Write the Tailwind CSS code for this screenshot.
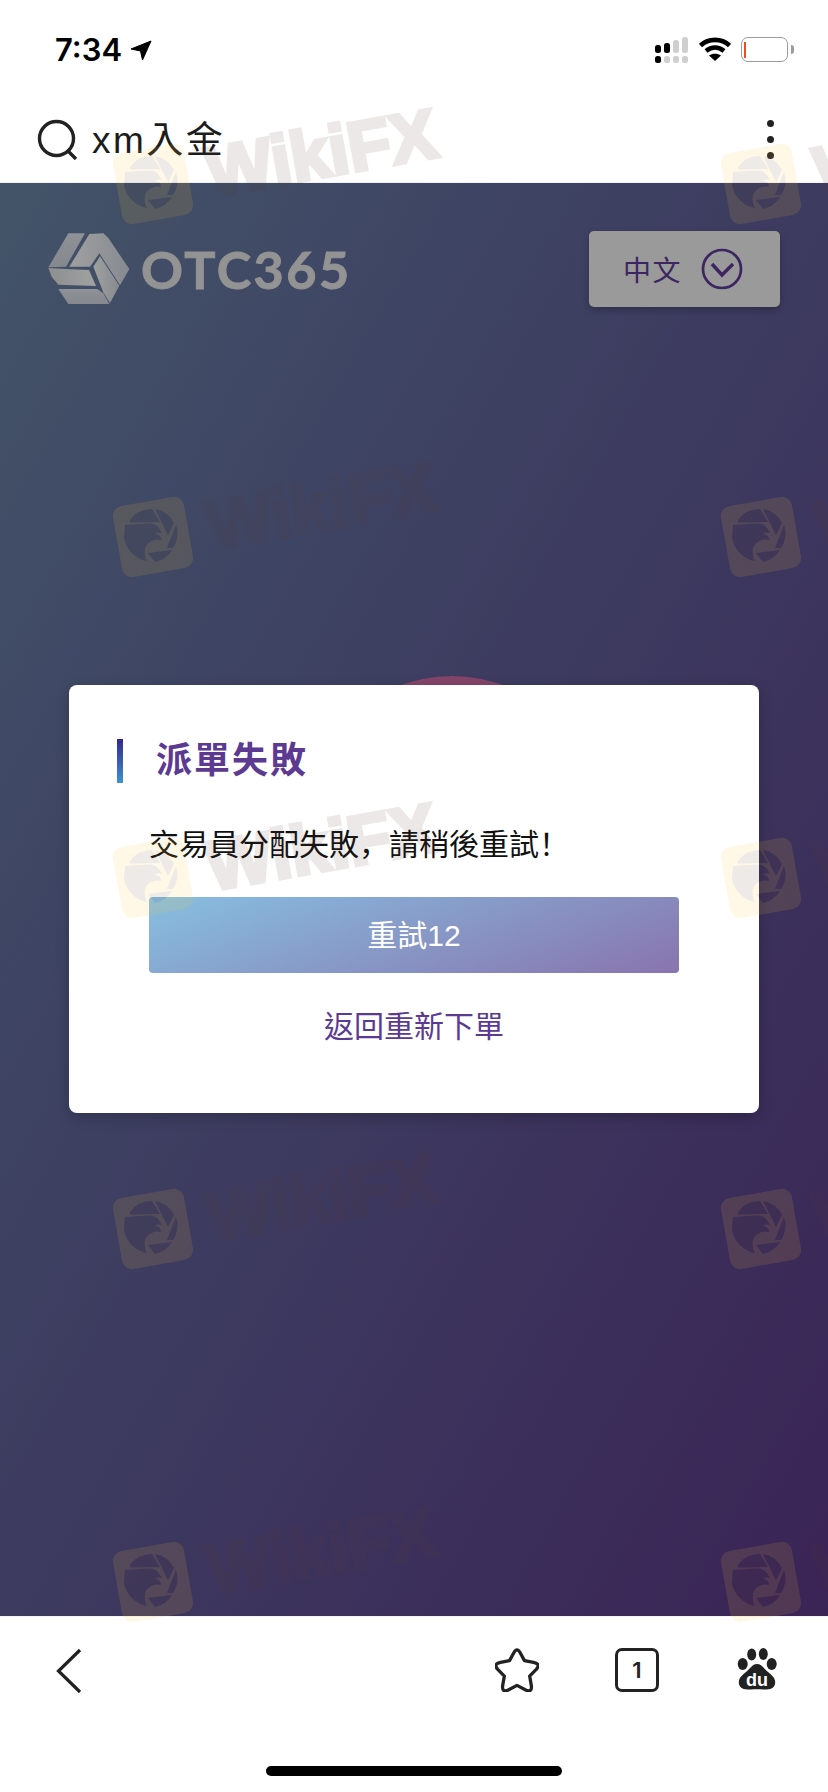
<!DOCTYPE html>
<html lang="en">
<head>
    <meta charset="UTF-8">
    <title>OTC365</title>
    <script src="https://cdn.jsdelivr.net/npm/@tailwindcss/browser@4"></script>
</head>
<body class="bg-white font-['Liberation_Sans','Noto_Sans_CJK_TC',sans-serif]">

<svg width="0" height="0" class="absolute">
    <defs>
        <g id="emblem">
            <!-- eagle + aperture blades, already tilted like the watermark -->
            <path d="M18 24 A27 27 0 0 1 40 13 L48 26 L18 26.500 Z"/>
            <path d="M43 13 A27 27 0 0 1 62 27 L56 39 Z"/>
            <path d="M64 29 A27 27 0 0 1 61 52 L55 52 Z"/>
            <path d="M60 54 A27 27 0 0 1 43 66 L36 57 Z"/>
            <path d="M13 29 L37 27.500 C43 27 47 31 50 37 C46 36 44 37 42 38 C46 38 49 40 49 44 C42 42 35 46 33 52 C32 57 33 62 35 65 C24 63 14 54 12 42 Z"/>
        </g>
        <mask id="logo-cut" maskUnits="userSpaceOnUse" x="-5" y="-5" width="92" height="92">
            <rect x="-5" y="-5" width="92" height="92" fill="white"/>
            <use href="#emblem" fill="black"/>
        </mask>
        <g id="wm-logo">
            <g mask="url(#logo-cut)">
                <rect x="5" y="5" width="72" height="72" rx="10" transform="rotate(-10 41 41)" fill="#ffc83c" fill-opacity="0.12"/>
            </g>
            <use href="#emblem" fill="#5a3c30" fill-opacity="0.11"/>
        </g>
        <linearGradient id="ribbon-a" x1="0" y1="0" x2="0" y2="1">
            <stop offset="0" stop-color="#8e9196"/>
            <stop offset="1" stop-color="#85888c"/>
        </linearGradient>
        <linearGradient id="ribbon-b" x1="0" y1="0" x2="1" y2="0">
            <stop offset="0" stop-color="#8c8e90"/>
            <stop offset="1" stop-color="#a2a2a2"/>
        </linearGradient>
        <linearGradient id="ribbon-c" x1="0" y1="0" x2="1" y2="0">
            <stop offset="0" stop-color="#a0a0a0"/>
            <stop offset="1" stop-color="#868a90"/>
        </linearGradient>
    </defs>
</svg>

<div class="relative w-[828px] h-[1792px] overflow-hidden flex flex-col">

    <!-- status bar -->
    <div class="h-[88px] pl-[55px] pr-[34px] pt-[31px] flex items-start justify-between bg-white">
        <div class="flex items-center gap-[8px]">
            <span class="text-[31px] leading-[38px] font-semibold text-black font-['Inter',sans-serif]">7:34</span>
            <svg width="22" height="21" viewBox="0 0 22 21"><path d="M1 9 L21 1 L12.500 20 L10.500 11 Z" fill="#000" stroke="#000" stroke-linejoin="round"/></svg>
        </div>
        <div class="flex items-start gap-[10px] pt-[6px]">
            <svg width="34" height="27" viewBox="0 0 34 27">
                <rect x="0" y="8" width="6" height="8" rx="2.500" fill="#000"/>
                <rect x="9" y="6" width="6" height="10" rx="2.500" fill="#000"/>
                <rect x="18" y="3" width="6" height="13" rx="2.500" fill="#cfcfcf"/>
                <rect x="27" y="0" width="6" height="16" rx="2.500" fill="#cfcfcf"/>
                <rect x="0" y="19" width="6" height="7" rx="2.500" fill="#000"/>
                <rect x="9" y="19" width="6" height="7" rx="2.500" fill="#cfcfcf"/>
                <rect x="18" y="19" width="6" height="7" rx="2.500" fill="#cfcfcf"/>
                <rect x="27" y="19" width="6" height="7" rx="2.500" fill="#cfcfcf"/>
            </svg>
            <svg width="32" height="24" viewBox="0 0 32 24" fill="none" stroke="#000" stroke-width="4.600">
                <path d="M1.500 8.500 C9.500 1 22.500 1 30.500 8.500"/>
                <path d="M7 14 C12.500 9.500 19.500 9.500 25 14"/>
                <path d="M16 24 L10 18.500 C13.500 16 18.500 16 22 18.500 Z" fill="#000" stroke="none"/>
            </svg>
            <div class="flex items-center">
                <div class="w-[47px] h-[25px] rounded-[7px] border-[1.5px] border-[#9a9a9a] px-[1.5px] py-[3.5px]">
                    <div class="w-[2.5px] h-full bg-[#ee4a30]"></div>
                </div>
                <div class="w-[3px] h-[9px] rounded-r-[3px] bg-[#9a9a9a] ml-[3px]"></div>
            </div>
        </div>
    </div>

    <!-- search bar -->
    <div class="h-[95px] pl-[37px] pr-[54px] pt-[9px] flex items-center justify-between bg-white border-b border-[#f2f2f2]">
        <div class="flex items-center gap-[13px]">
            <svg width="42" height="42" viewBox="0 0 42 42" fill="none" stroke="#222" stroke-width="3.400">
                <circle cx="19.500" cy="19.500" r="17"/>
                <path d="M30 31 L39 40"/>
            </svg>
            <span class="mt-[2px] text-[37px] leading-[44px] text-[#1c1c1c] tracking-[2.5px]">xm入金</span>
        </div>
        <div class="flex flex-col gap-[9px]">
            <div class="w-[7px] h-[7px] rounded-full bg-[#222]"></div>
            <div class="w-[7px] h-[7px] rounded-full bg-[#222]"></div>
            <div class="w-[7px] h-[7px] rounded-full bg-[#222]"></div>
        </div>
    </div>

    <!-- page -->
    <div class="relative flex-1 bg-[linear-gradient(to_bottom_right,#435468,#3e4363_32%,#3a2456)]">
        <div class="h-[130px] px-[48px] pt-[48px] flex items-start justify-between">
            <div class="flex items-center gap-[11px] pt-[2px]">
                <svg width="82" height="72" viewBox="24 27 246 216">
                    <polygon points="85,28 135,28 78,128 25,130" fill="url(#ribbon-a)"/>
                    <polygon points="25,132 75,135 147,138 168,186 55,182 35,158" fill="url(#ribbon-b)"/>
                    <polygon points="148,30 190,28 205,42 268,135 240,184 178,88 150,128 88,128" fill="url(#ribbon-c)"/>
                    <polygon points="160,128 180,97 238,185 210,237 190,205" fill="url(#ribbon-c)"/>
                    <polygon points="55,195 172,195 190,208 208,240 85,240" fill="url(#ribbon-a)"/>
                </svg>
                <span class="text-[52px] leading-[60px] font-bold tracking-[2.5px] text-[#939393] [-webkit-text-stroke:1px_#939393] font-['Lato',sans-serif]">OTC365</span>
            </div>
            <div class="w-[191px] h-[76px] rounded-[5px] bg-[#9a9a9a] shadow-[0_3px_6px_rgba(0,0,0,0.25)] flex items-center pl-[34px] gap-[19px]">
                <span class="mt-[5px] text-[28px] leading-[32px] tracking-[1.5px] text-[#3c2560]">中文</span>
                <svg width="42" height="42" viewBox="0 0 42 42" fill="none" stroke="#3c2560">
                    <circle cx="21" cy="21" r="19" stroke-width="2.700"/>
                    <path d="M11 16 L21 27 L32 16" stroke-width="3.400"/>
                </svg>
            </div>
        </div>

        <!-- pink circle peeking behind the dialog -->
        <div class="absolute left-[302px] top-[493px] w-[300px] h-[300px] rounded-full bg-[#84456a]"></div>

        <!-- dialog -->
        <div class="absolute left-[69px] top-[502px] w-[690px] h-[428px] rounded-[8px] bg-white shadow-[0_4px_14px_rgba(0,0,0,0.22)] pt-[54px] px-[80px]">
            <div class="flex items-center -ml-[32px] h-[44px]">
                <div class="w-[6px] h-[44px] bg-[linear-gradient(to_bottom,#35278f,#3d93cf)]"></div>
                <h2 class="ml-[33px] text-[36px] leading-[44px] font-bold tracking-[2px] text-[#5c3a92]">派單失敗</h2>
            </div>
            <p class="mt-[34px] text-[30px] leading-[50px] text-[#111] whitespace-nowrap font-['Noto_Sans_CJK_SC',sans-serif]">交易員分配失敗，請稍後重試！</p>
            <button class="mt-[30px] block w-[530px] h-[76px] rounded-[4px] bg-[linear-gradient(160deg,#87bfe0,#8874ae)] text-[30px] text-white">重試12</button>
            <div class="mt-[32px] w-[530px] text-center text-[30px] leading-[44px] text-[#5c3a92]">返回重新下單</div>
        </div>
    </div>

    <!-- bottom bar -->
    <div class="relative h-[176px] bg-white border-t border-[#f4f4f4]">
        <div class="h-[124px] flex items-start pt-[31px] pl-[56px]">
            <svg width="26" height="46" viewBox="0 0 26 46" fill="none" stroke="#222" stroke-width="3.200">
                <path d="M24 2 L2.500 23 L24 44"/>
            </svg>
            <svg class="ml-[413px]" width="44" height="44" viewBox="3 2 40 40" fill="none" stroke="#222" stroke-width="3" stroke-linejoin="round">
                <path d="M20 6.500 Q23 1 26 6.500 L29.800 13.500 L38 15 Q45 16.500 40.500 21.500 L34.500 27.500 L36 36 Q37 43 30.500 40 L23 36 L15.500 40 Q9 43 10 36 L11.500 27.500 L5.500 21.500 Q1 16.500 8 15 L16.200 13.500 Z"/>
            </svg>
            <div class="ml-[76px] w-[44px] h-[44px] rounded-[7px] border-[3px] border-[#222] flex items-center justify-center text-[22px] font-semibold text-[#222] font-['Inter',sans-serif]">1</div>
            <svg class="ml-[78px]" width="40" height="42" viewBox="0 0 40 42">
                <ellipse cx="14.700" cy="6.500" rx="4.500" ry="6" fill="#222"/>
                <ellipse cx="26.300" cy="6" rx="4.500" ry="6" fill="#222"/>
                <ellipse cx="5.700" cy="16" rx="5" ry="6" fill="#222"/>
                <ellipse cx="34.700" cy="16" rx="5" ry="6" fill="#222"/>
                <path d="M20 16 C25 16 27 21 31 24 C36 28 39 31 38 36 C37 41 31 42 26 41.500 C22 41 18 41 14 41.500 C9 42 3 41 2 36 C1 31 4 28 9 24 C13 21 15 16 20 16 Z" fill="#222"/>
                <text x="20" y="37.500" text-anchor="middle" font-family="Liberation Sans, sans-serif" font-size="18" font-weight="700" fill="#fff">du</text>
            </svg>
        </div>
        <div class="absolute left-[266px] top-[149px] w-[296px] h-[10px] rounded-full bg-black"></div>
    </div>

    <!-- WikiFX watermark, laid over the whole screenshot -->
    <div class="absolute inset-0 pointer-events-none">
        <svg class="absolute left-[112px] top-[143px] overflow-visible" width="82" height="82"><use href="#wm-logo"/></svg>
        <svg class="absolute left-[720px] top-[143px] overflow-visible" width="82" height="82"><use href="#wm-logo"/></svg>
        <svg class="absolute left-[112px] top-[496px] overflow-visible" width="82" height="82"><use href="#wm-logo"/></svg>
        <svg class="absolute left-[720px] top-[496px] overflow-visible" width="82" height="82"><use href="#wm-logo"/></svg>
        <svg class="absolute left-[112px] top-[837px] overflow-visible" width="82" height="82"><use href="#wm-logo"/></svg>
        <svg class="absolute left-[720px] top-[837px] overflow-visible" width="82" height="82"><use href="#wm-logo"/></svg>
        <svg class="absolute left-[112px] top-[1188px] overflow-visible" width="82" height="82"><use href="#wm-logo"/></svg>
        <svg class="absolute left-[720px] top-[1188px] overflow-visible" width="82" height="82"><use href="#wm-logo"/></svg>
        <svg class="absolute left-[112px] top-[1541px] overflow-visible" width="82" height="82"><use href="#wm-logo"/></svg>
        <svg class="absolute left-[720px] top-[1541px] overflow-visible" width="82" height="82"><use href="#wm-logo"/></svg>

        <span class="absolute left-[205px] top-[113px] rotate-[-10deg] text-[70px] leading-[80px] font-bold text-[#5a3c30] [-webkit-text-stroke:4px_#5a3c30] opacity-[0.11]">WikiFX</span>
        <span class="absolute left-[813px] top-[113px] rotate-[-10deg] text-[70px] leading-[80px] font-bold text-[#5a3c30] [-webkit-text-stroke:4px_#5a3c30] opacity-[0.11]">WikiFX</span>
        <span class="absolute left-[205px] top-[466px] rotate-[-10deg] text-[70px] leading-[80px] font-bold text-[#5a3c30] [-webkit-text-stroke:4px_#5a3c30] opacity-[0.11]">WikiFX</span>
        <span class="absolute left-[813px] top-[466px] rotate-[-10deg] text-[70px] leading-[80px] font-bold text-[#5a3c30] [-webkit-text-stroke:4px_#5a3c30] opacity-[0.11]">WikiFX</span>
        <span class="absolute left-[205px] top-[807px] rotate-[-10deg] text-[70px] leading-[80px] font-bold text-[#5a3c30] [-webkit-text-stroke:4px_#5a3c30] opacity-[0.11]">WikiFX</span>
        <span class="absolute left-[813px] top-[807px] rotate-[-10deg] text-[70px] leading-[80px] font-bold text-[#5a3c30] [-webkit-text-stroke:4px_#5a3c30] opacity-[0.11]">WikiFX</span>
        <span class="absolute left-[205px] top-[1158px] rotate-[-10deg] text-[70px] leading-[80px] font-bold text-[#5a3c30] [-webkit-text-stroke:4px_#5a3c30] opacity-[0.11]">WikiFX</span>
        <span class="absolute left-[813px] top-[1158px] rotate-[-10deg] text-[70px] leading-[80px] font-bold text-[#5a3c30] [-webkit-text-stroke:4px_#5a3c30] opacity-[0.11]">WikiFX</span>
        <span class="absolute left-[205px] top-[1511px] rotate-[-10deg] text-[70px] leading-[80px] font-bold text-[#5a3c30] [-webkit-text-stroke:4px_#5a3c30] opacity-[0.11]">WikiFX</span>
        <span class="absolute left-[813px] top-[1511px] rotate-[-10deg] text-[70px] leading-[80px] font-bold text-[#5a3c30] [-webkit-text-stroke:4px_#5a3c30] opacity-[0.11]">WikiFX</span>
    </div>
</div>

</body>
</html>
